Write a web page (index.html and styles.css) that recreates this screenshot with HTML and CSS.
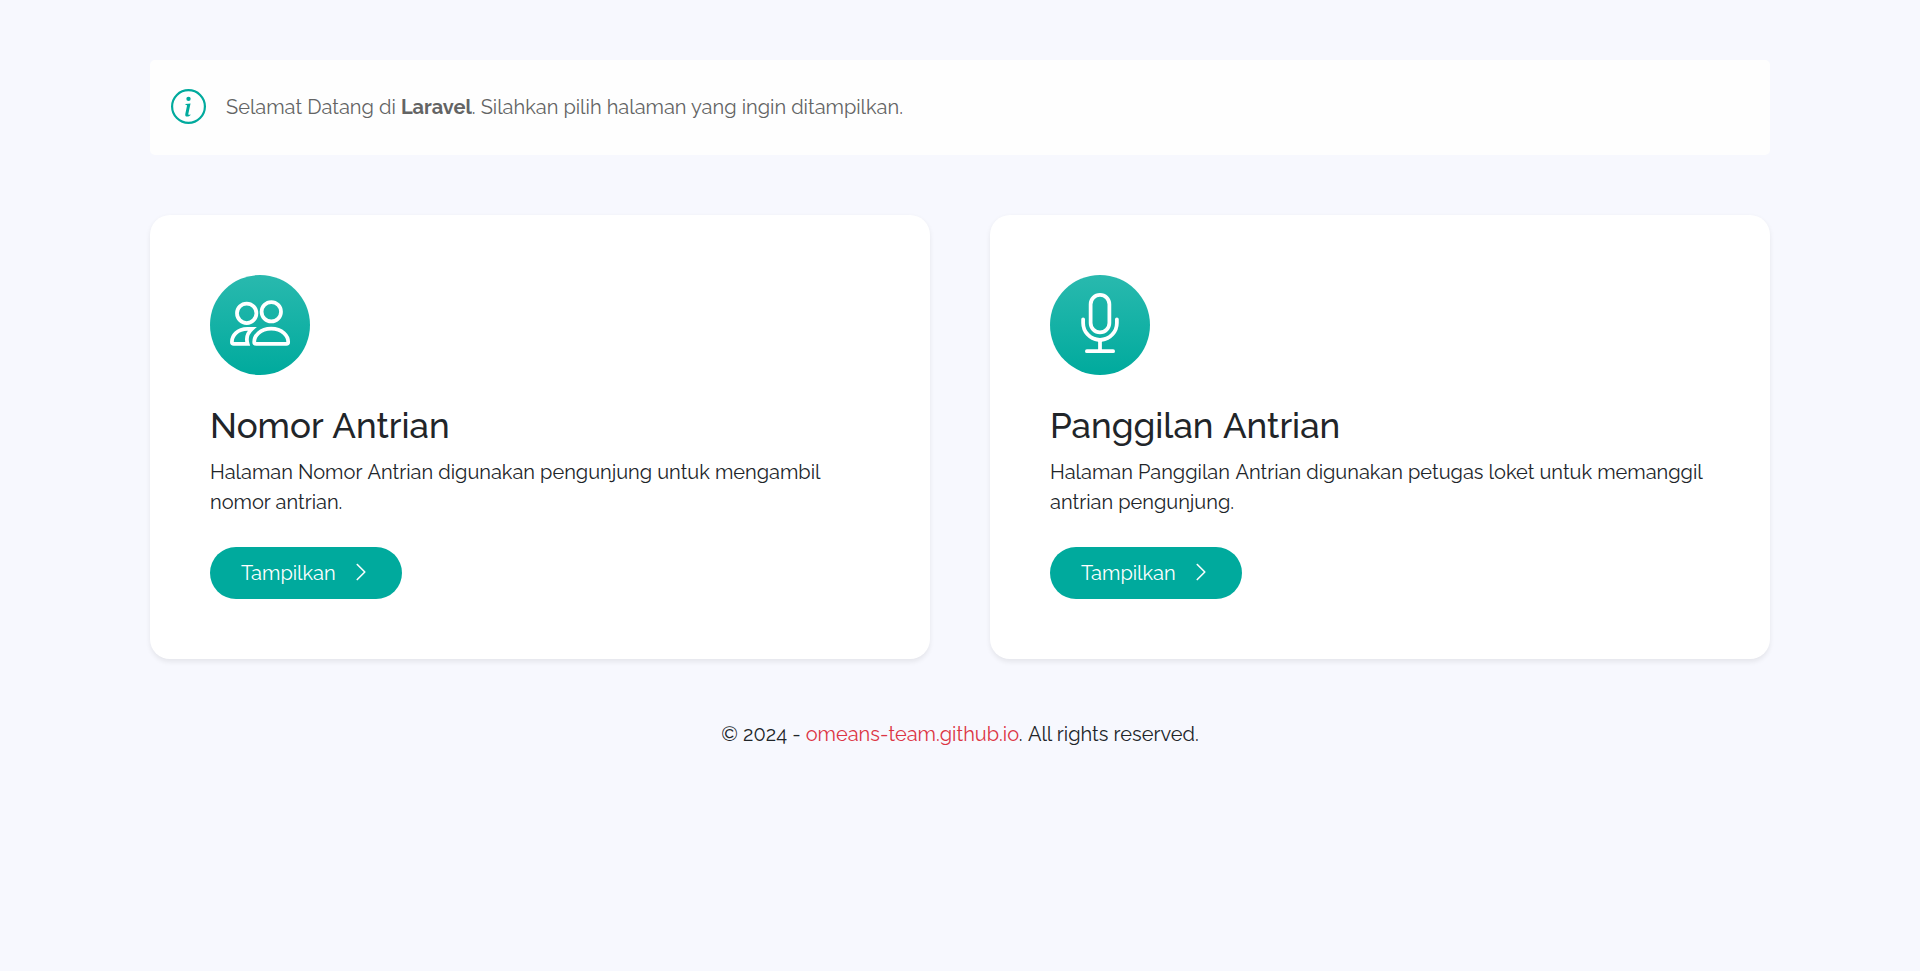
FILE: index.html
```html
<!DOCTYPE html>
<html lang="id">
<head>
<meta charset="utf-8">
<title>Antrian</title>
<link rel="stylesheet" href="styles.css">
</head>
<body>
<main class="container">
  <div class="alert">
    <svg class="alert-icon" viewBox="0 0 16 16" fill="currentColor"><path d="M8 15A7 7 0 1 1 8 1a7 7 0 0 1 0 14zm0 1A8 8 0 1 0 8 0a8 8 0 0 0 0 16z"/><path d="m8.93 6.588-2.29.287-.082.38.45.083c.294.07.352.176.288.469l-.738 3.468c-.194.897.105 1.319.808 1.319.545 0 1.178-.252 1.465-.598l.088-.416c-.2.176-.492.246-.686.246-.275 0-.375-.193-.304-.533L8.93 6.588zM9 4.5a1 1 0 1 1-2 0 1 1 0 0 1 2 0z"/></svg>
    <p class="alert-text">Selamat Datang di <strong>Laravel</strong>. Silahkan pilih halaman yang ingin ditampilkan.</p>
  </div>
  <div class="cards">
    <section class="card">
      <div class="feature-icon">
        <svg viewBox="0 0 100 100" fill="none" stroke="currentColor" stroke-width="3.75"><circle cx="36.7" cy="38.3" r="9.7"/><circle cx="61.3" cy="36.7" r="9.7"/><path d="M46 68.8h30.3q1.9 0 1.9-1.9C78.2 61 72.5 53.6 61.2 53.6S44.2 61 44.2 66.9q0 1.9 1.8 1.9z"/><path d="M37.6 68.8H23.8q-1.9 0-1.9-1.9C21.9 61 27 53.9 37.5 53.9H42C38 57.5 35.8 63 37.6 68.8z"/></svg>
      </div>
      <h3 class="title">Nomor <span class="kern">Antrian</span></h3>
      <p class="desc">Halaman Nomor <span class="kern">Antrian</span> digunakan pengunjung untuk mengambil<br>nomor antrian.</p>
      <a class="btn"><span>Tampilkan</span><svg class="chevron" viewBox="0 0 16 16" fill="currentColor"><path d="M4.646 1.646a.5.5 0 0 1 .708 0l6 6a.5.5 0 0 1 0 .708l-6 6a.5.5 0 0 1-.708-.708L10.293 8 4.646 2.354a.5.5 0 0 1 0-.708z"/></svg></a>
    </section>
    <section class="card">
      <div class="feature-icon">
        <svg class="mic" viewBox="0 0 16 16" fill="currentColor"><path d="M3.5 6.5A.5.5 0 0 1 4 7v1a4 4 0 0 0 8 0V7a.5.5 0 0 1 1 0v1a5 5 0 0 1-4.5 4.975V15h3a.5.5 0 0 1 0 1h-7a.5.5 0 0 1 0-1h3v-2.025A5 5 0 0 1 3 8V7a.5.5 0 0 1 .5-.5z"/><path d="M10 8a2 2 0 1 1-4 0V3a2 2 0 1 1 4 0v5zM8 0a3 3 0 0 0-3 3v5a3 3 0 0 0 6 0V3a3 3 0 0 0-3-3z"/></svg>
      </div>
      <h3 class="title">Panggilan <span class="kern">Antrian</span></h3>
      <p class="desc">Halaman Panggilan <span class="kern">Antrian</span> digunakan petugas loket untuk memanggil<br>antrian pengunjung.</p>
      <a class="btn"><span>Tampilkan</span><svg class="chevron" viewBox="0 0 16 16" fill="currentColor"><path d="M4.646 1.646a.5.5 0 0 1 .708 0l6 6a.5.5 0 0 1 0 .708l-6 6a.5.5 0 0 1-.708-.708L10.293 8 4.646 2.354a.5.5 0 0 1 0-.708z"/></svg></a>
    </section>
  </div>
</main>
<footer class="footer">© 2024 - <a class="link">omeans-team.github.io</a>. <span class="kern">All</span> rights reserved.</footer>
</body>
</html>
```
FILE: styles.css
```css
* { box-sizing: border-box; }
body { margin: 0; background: #f7f8fe; color: #212529; font: 400 20px/30px Raleway, Lato, "Open Sans", sans-serif; font-variant-numeric: oldstyle-nums; white-space: nowrap; }
p, h3 { margin: 0; }
.container { width: 1620px; margin: 0 auto; padding-top: 60px; }
.alert { height: 95px; padding: 0 20px 1px 21px; display: flex; align-items: center; gap: 20px; background: #fefefe; border-radius: 5px; color: #636464; }
.alert-icon { width: 35px; height: 35px; margin-bottom: 2px; color: #00aa9d; flex: none; }
.alert-text strong { font-weight: 700; }
.cards { display: grid; grid-template-columns: 1fr 1fr; gap: 60px; margin-top: 60px; }
.card { height: 444px; padding: 60px; background: #fff; border-radius: 20px; box-shadow: 0 2.5px 5px rgba(0, 0, 0, .075); }
.feature-icon { width: 100px; height: 100px; border-radius: 50%; background: linear-gradient(#29b9ae, #00aa9d); color: #fff; }
.feature-icon svg { display: block; width: 100px; height: 100px; }
.feature-icon .mic { width: 100px; height: 78px; padding: 18px 20px 0; }
.title { margin: 30px 0 10px; font-size: 35px; line-height: 42px; font-weight: 500; }
.kern { margin-left: .018em; }
.btn { display: inline-flex; align-items: center; margin-top: 30px; width: 192px; height: 52px; padding-left: 31px; border-radius: 26px; background: #00aa9d; color: #fff; }
.btn span { width: 109.5px; }
.chevron { width: 20px; height: 20px; margin-bottom: 2px; stroke: currentColor; stroke-width: .2; }
.footer { margin-top: 60px; text-align: center; }
.link { color: #dc3545; }
```
